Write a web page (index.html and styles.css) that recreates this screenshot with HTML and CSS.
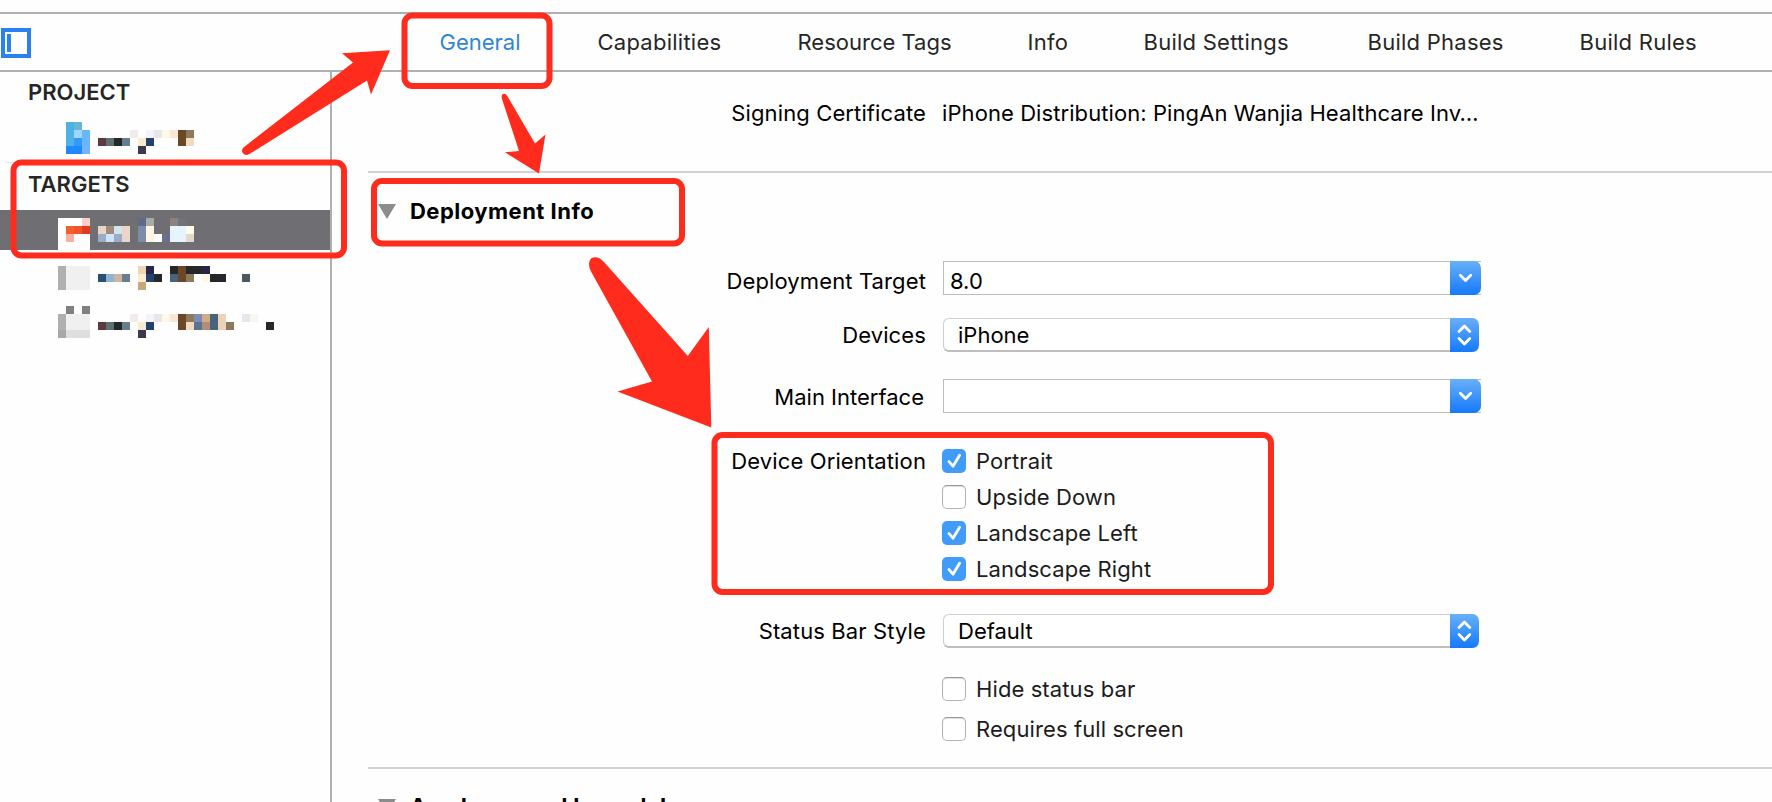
FILE: index.html
```html
<!DOCTYPE html>
<html lang="en">
<head>
<meta charset="utf-8">
<title>Project Settings</title>
<link rel="stylesheet" href="styles.css">
</head>
<body>
<div class="window">
  <header class="toolbar">
    <svg class="panel-icon" width="30" height="30" viewBox="0 0 30 30"><rect x="2" y="2" width="26" height="26" fill="none" stroke="#2a82f0" stroke-width="4"/><rect x="6" y="6" width="4" height="18" fill="#2a82f0"/></svg>
    <nav class="tabs">
      <span class="tab tight active">General</span>
      <span class="tab">Capabilities</span>
      <span class="tab tight">Resource Tags</span>
      <span class="tab">Info</span>
      <span class="tab">Build Settings</span>
      <span class="tab">Build Phases</span>
      <span class="tab">Build Rules</span>
    </nav>
  </header>
  <div class="body">
    <aside class="sidebar">
      <h2 class="side-title">PROJECT</h2>
      <div class="side-row project-row">
        <svg class="mosaic" width="290" height="40" viewBox="0 0 290 40" shape-rendering="crispEdges">
          <path fill="#50b1e0" d="M66 4h8v8h-8z"/><path fill="#66b6d8" d="M74 4h8v8h-8z"/>
          <path fill="#4db2e6" d="M66 12h8v16h-8z"/><path fill="#a0d5ff" d="M74 12h8v8h-8z"/><path fill="#66b8f5" d="M82 12h8v8h-8z"/>
          <path fill="#3399ff" d="M74 20h8v8h-8z"/><path fill="#6bb5ff" d="M82 20h8v8h-8z"/><path fill="#1f88ff" d="M66 28h16v8h-16z"/><path fill="#73b3ff" d="M82 28h8v8h-8z"/>
          <path fill="#5c3a40" d="M98 20h8v8h-8z"/><path fill="#5f7070" d="M106 20h8v8h-8z"/><path fill="#262728" d="M114 20h8v8h-8z"/><path fill="#667f90" d="M122 20h8v8h-8z"/>
          <path fill="#f2ebeb" d="M130 12h8v8h-8z"/><path fill="#f8ecd0" d="M138 20h8v8h-8z"/><path fill="#3a3a4c" d="M138 28h8v8h-8z"/><path fill="#24406e" d="M146 20h8v8h-8z"/><path fill="#f4f4fc" d="M146 12h8v8h-8z"/><path fill="#e8e6ea" d="M154 12h8v8h-8z"/><path fill="#fef8e6" d="M162 12h8v8h-8z"/><path fill="#fae8d6" d="M170 12h8v8h-8z"/>
          <path fill="#6b4726" d="M178 12h8v16h-8z"/><path fill="#8d7a5c" d="M186 12h8v8h-8z"/><path fill="#f0dbc0" d="M186 20h8v8h-8z"/>
        </svg>
      </div>
      <div class="side-divider"></div>
      <h2 class="side-title targets-title">TARGETS</h2>
      <div class="side-row selected">
        <svg class="mosaic" width="290" height="40" viewBox="0 0 290 40" shape-rendering="crispEdges">
          <path fill="#fff" d="M58 8h32v32h-32z"/><path fill="#fbcfc6" d="M82 8h8v8h-8z"/><path fill="#f4602a" d="M66 16h8v8h-8z"/><path fill="#ec5528" d="M74 16h8v8h-8z"/><path fill="#e23a20" d="M82 16h8v8h-8z"/><path fill="#f6b0a4" d="M66 24h8v8h-8z"/>
          <path fill="#e8d4c8" d="M98 16h8v8h-8z"/><path fill="#a08a7c" d="M106 16h8v8h-8z"/><path fill="#d4e4ec" d="M114 16h8v8h-8z"/><path fill="#ecd4c8" d="M122 16h8v16h-8z"/><path fill="#9aacc8" d="M98 24h8v8h-8zM114 24h8v8h-8z"/><path fill="#cce4f8" d="M106 24h8v8h-8z"/>
          <path fill="#5f6a8a" d="M138 8h8v8h-8z"/><path fill="#a8aaa4" d="M146 8h8v8h-8z"/><path fill="#7a8ca8" d="M138 16h8v16h-8z"/><path fill="#fcf4e4" d="M146 16h8v16h-8z"/><path fill="#fff" d="M154 24h8v8h-8z"/><path fill="#6a6e90" d="M162 24h8v8h-8z"/>
          <path fill="#8c8080" d="M170 8h8v8h-8z"/><path fill="#70747a" d="M178 8h8v8h-8z"/><path fill="#e5f4fd" d="M170 16h16v16h-16z"/><path fill="#fffcec" d="M186 16h8v8h-8z"/><path fill="#e4d8c8" d="M186 24h8v8h-8z"/>
        </svg>
      </div>
      <div class="side-row target-row">
        <svg class="mosaic" width="290" height="40" viewBox="0 0 290 40" shape-rendering="crispEdges">
          <path fill="#b0b0b0" d="M58 8h8v24h-8z"/><path fill="#f0f0f0" d="M66 8h24v24h-24z"/>
          <path fill="#2a5070" d="M98 16h8v8h-8z"/><path fill="#8cb4d4" d="M106 16h8v8h-8z"/><path fill="#d0b4a0" d="M114 16h8v8h-8z"/><path fill="#667f90" d="M122 16h8v8h-8z"/>
          <path fill="#ecd4b4" d="M138 8h8v8h-8z"/><path fill="#26264a" d="M146 8h8v8h-8zM202 8h8v8h-8z"/><path fill="#fcecd4" d="M138 16h8v8h-8z"/><path fill="#28406e" d="M146 16h8v8h-8z"/><path fill="#262728" d="M154 16h8v8h-8zM170 8h8v8h-8zM186 8h16v8h-16zM210 16h16v8h-16z"/><path fill="#c8a878" d="M138 24h8v8h-8z"/>
          <path fill="#6b4726" d="M178 8h8v16h-8z"/><path fill="#46647c" d="M170 16h8v8h-8z"/><path fill="#8d7a5c" d="M186 16h8v8h-8z"/><path fill="#fef8e6" d="M202 16h8v8h-8z"/><path fill="#4c5a60" d="M242 16h8v8h-8z"/>
        </svg>
      </div>
      <div class="side-row">
        <svg class="mosaic" width="290" height="40" viewBox="0 0 290 40" shape-rendering="crispEdges">
          <path fill="#808080" d="M66 0h8v8h-8zM82 0h8v8h-8z"/><path fill="#b0b0b0" d="M58 8h8v16h-8z"/><path fill="#f0f0f0" d="M66 8h24v16h-24z"/><path fill="#a8a8a8" d="M58 24h8v8h-8z"/><path fill="#dfdfdf" d="M66 24h24v8h-24z"/>
          <path fill="#5c3a40" d="M98 16h8v8h-8z"/><path fill="#5f7070" d="M106 16h8v8h-8z"/><path fill="#262728" d="M114 16h8v8h-8zM266 16h8v8h-8z"/><path fill="#667f90" d="M122 16h8v8h-8z"/>
          <path fill="#f2ebeb" d="M130 8h8v8h-8z"/><path fill="#f8ecd0" d="M138 16h8v8h-8z"/><path fill="#3a3a4c" d="M138 24h8v8h-8z"/><path fill="#24406e" d="M146 16h8v8h-8z"/><path fill="#f4f4fc" d="M146 8h8v8h-8z"/><path fill="#e8e6ea" d="M154 8h8v8h-8zM242 8h8v8h-8z"/><path fill="#fef8e6" d="M162 8h8v8h-8z"/><path fill="#fae8d6" d="M170 8h8v8h-8z"/>
          <path fill="#6b4726" d="M178 8h8v16h-8z"/><path fill="#8d7a5c" d="M186 8h8v8h-8zM226 16h8v8h-8z"/><path fill="#f0dbc0" d="M186 16h8v8h-8z"/><path fill="#7c8cb4" d="M194 8h8v8h-8z"/><path fill="#587490" d="M194 16h8v8h-8z"/><path fill="#d0ac84" d="M202 8h8v8h-8z"/><path fill="#b48c7c" d="M202 16h8v8h-8z"/><path fill="#46647c" d="M210 8h8v16h-8z"/><path fill="#ecd2b6" d="M218 8h8v16h-8z"/><path fill="#f8f8f0" d="M250 8h8v8h-8z"/>
        </svg>
      </div>
    </aside>
    <main class="content">
      <section class="signing">
        <div class="row"><span class="label">Signing Certificate</span><span class="value">iPhone Distribution: PingAn Wanjia Healthcare Inv…</span></div>
      </section>
      <section class="deployment">
        <div class="section-head"><span class="triangle"></span><h3 class="section-title">Deployment Info</h3></div>
        <div class="row target-field">
          <span class="label">Deployment Target</span>
          <div class="field combo"><span class="field-text">8.0</span><span class="cap"><svg width="31" height="34" viewBox="0 0 31 34"><path d="M10.3 14.3l5.2 5.2 5.2-5.2"/></svg></span></div>
        </div>
        <div class="row devices-field">
          <span class="label">Devices</span>
          <div class="field popup"><span class="field-text">iPhone</span><span class="cap"><svg width="29" height="34" viewBox="0 0 29 34"><path d="M9 13.5l5.4-5.4 5.4 5.4M9 20.5l5.4 5.4 5.4-5.4"/></svg></span></div>
        </div>
        <div class="row main-field">
          <span class="label label-main">Main Interface</span>
          <div class="field combo"><span class="cap"><svg width="31" height="34" viewBox="0 0 31 34"><path d="M10.3 14.3l5.2 5.2 5.2-5.2"/></svg></span></div>
        </div>
        <div class="row orientation">
          <span class="label">Device Orientation</span>
          <div class="checks">
            <div class="check"><span class="box on"><svg width="24" height="24" viewBox="0 0 24 24"><path d="M7 12.6l4 4.6 6.6-11"/></svg></span><span class="check-text">Portrait</span></div>
            <div class="check"><span class="box"></span><span class="check-text">Upside Down</span></div>
            <div class="check"><span class="box on"><svg width="24" height="24" viewBox="0 0 24 24"><path d="M7 12.6l4 4.6 6.6-11"/></svg></span><span class="check-text">Landscape Left</span></div>
            <div class="check"><span class="box on"><svg width="24" height="24" viewBox="0 0 24 24"><path d="M7 12.6l4 4.6 6.6-11"/></svg></span><span class="check-text">Landscape Right</span></div>
          </div>
        </div>
        <div class="row status-field">
          <span class="label">Status Bar Style</span>
          <div class="field popup"><span class="field-text">Default</span><span class="cap"><svg width="29" height="34" viewBox="0 0 29 34"><path d="M9 13.5l5.4-5.4 5.4 5.4M9 20.5l5.4 5.4 5.4-5.4"/></svg></span></div>
        </div>
        <div class="row options">
          <span class="label"></span>
          <div class="checks loose">
            <div class="check"><span class="box"></span><span class="check-text">Hide status bar</span></div>
            <div class="check"><span class="box"></span><span class="check-text">Requires full screen</span></div>
          </div>
        </div>
      </section>
      <section class="icons-section">
        <div class="section-head"><span class="triangle"></span><h3 class="section-title">App Icons and Launch Images</h3></div>
      </section>
    </main>
  </div>
  <svg class="annotations" width="1772" height="802" viewBox="0 0 1772 802">
    <g class="frames">
      <rect x="13.5" y="162.5" width="330.5" height="93" rx="8"/>
      <rect x="404.5" y="15.5" width="145" height="70.5" rx="8"/>
      <rect x="374" y="181" width="308" height="62.5" rx="8"/>
      <rect x="714.5" y="435" width="556.5" height="157" rx="8"/>
    </g>
    <g class="arrows">
      <path d="M243.5 147.5L353 62.5 342 53.3 390 50.2 371 94.5 367 80.5 249 154.3Q245 156 242.7 153Q241 150 243.5 147.5Z"/>
      <path d="M502 99Q500.800 94.500 503.500 93.800Q506 93 507.500 96.500L535 143.500 545.500 134.500 539 173.500 505 152.300 519 151Z"/>
      <path d="M591 271.500Q587 263 591 258.500Q597 255 603.500 261.500L687.800 356 708.800 327 711.300 427.500 617.500 391.500 652 381.500Z"/>
    </g>
  </svg>
</div>
</body>
</html>
```
FILE: styles.css
```css
* { box-sizing: border-box; }
body { margin: 0; background: #fefefe; overflow: hidden; }
.window {
  position: relative;
  width: 1772px;
  height: 802px;
  padding-top: 12px;
  overflow: hidden;
  display: flex;
  flex-direction: column;
  background: #fefefe;
  color: #000;
  font: 400 22px/28px Inter, Roboto, "Liberation Sans", sans-serif;
  white-space: nowrap;
}
.toolbar {
  flex: none;
  display: flex;
  align-items: center;
  height: 60px;
  padding-left: 1px;
  border-top: 2px solid #b0b0b0;
  border-bottom: 2px solid #b0b0b0;
}
.panel-icon { display: block; margin-top: 2px; }
.tabs {
  display: grid;
  grid-template-columns: 158px 200px 230px 116px 224px 212px 150px;
  margin-left: 408.5px;
  color: #262626;
  letter-spacing: 0.25px;
}
.tab.tight { letter-spacing: 0; }
.tab.active { color: #2f86d2; }
.body { flex: 1; display: flex; min-height: 0; }
.sidebar { width: 332px; border-right: 2px solid #b0b0b0; }
.side-title {
  margin: 6px 0 0 28px;
  font-size: 22px;
  line-height: 28px;
  font-weight: 600;
  color: #262626;
}
.side-row { height: 48px; }
.mosaic { display: block; }
.project-row { margin-top: 12px; height: 44px; }
.side-divider { height: 1px; margin-left: 6px; background: #e6e6e6; }
.targets-title { margin-top: 7px; }
.side-row.selected { height: 40px; margin-top: 12px; background: #6f6e73; }
.target-row { margin-top: 8px; }
.content { flex: 1; padding-left: 36px; }
.signing { height: 101px; padding-top: 27px; border-bottom: 2px solid #d2d2d2; }
.deployment { height: 596px; border-bottom: 2px solid #d2d2d2; padding-top: 24px; }
.row { display: grid; grid-template-columns: 558px 1fr; column-gap: 17px; }
.label { text-align: right; letter-spacing: 0.12px; }
.value { margin-left: -1px; letter-spacing: 0.08px; }
.label-main { padding-right: 2px; letter-spacing: 0; }
.section-head { display: flex; align-items: center; height: 28px; padding-left: 10px; }
.triangle { border: 9px solid transparent; border-top: 15px solid #8c8c8c; border-bottom: 0; margin-right: 14px; }
.section-title { margin: 0; font-size: 22px; line-height: 28px; font-weight: 700; letter-spacing: 0.48px; }
.icons-section .section-title { letter-spacing: 0.32px; }
.field { display: flex; align-self: start; height: 34px; line-height: 38px; border: 1px solid #bcbcbc; border-right: 0; background: #fff; }
.combo { width: 538px; }
.combo .field-text { padding-left: 6px; }
.popup { width: 536px; border-radius: 6px; border-color: #d0d0d0; border-bottom: 2px solid #bebebe; line-height: 33px; }
.popup .field-text { padding-left: 14px; }
.cap {
  margin: -1px 0 -1px auto;
  height: 34px;
  border-radius: 0 7px 7px 0;
  background: linear-gradient(#68b0f8, #1579fb);
}
.cap svg, .box svg { display: block; fill: none; stroke: #fff; stroke-width: 2.8; stroke-linecap: round; stroke-linejoin: round; }
.target-field { margin-top: 36px; }
.target-field .label { line-height: 40px; }
.target-field, .devices-field, .main-field, .status-field { height: 34px; }
.devices-field { margin-top: 23px; }
.devices-field .label, .status-field .label { line-height: 34px; }
.main-field { margin-top: 27px; }
.main-field .label { line-height: 36px; }
.orientation { margin-top: 34px; }
.checks { display: flex; flex-direction: column; gap: 8px; margin-left: -1px; }
.check { display: flex; align-items: center; height: 28px; }
.check-text { color: #1c1c1c; letter-spacing: 0.1px; }
.loose { gap: 12px; }
.box {
  width: 24px;
  height: 24px;
  margin-right: 10px;
  border: 1px solid #b4b4b4;
  border-top-color: #989898;
  border-radius: 5px;
  background: #fff;
  box-shadow: inset 0 1px 1px #ddd;
}
.box.on { border: 0; background: #419bf9; box-shadow: none; }
.status-field { margin-top: 31px; }
.options { margin-top: 27px; }
.icons-section { padding-top: 23px; }
.annotations { position: absolute; left: 0; top: 0; }
.frames { fill: none; stroke: #ff2b1c; stroke-width: 6; }
.arrows { fill: #ff2b1c; }
```
